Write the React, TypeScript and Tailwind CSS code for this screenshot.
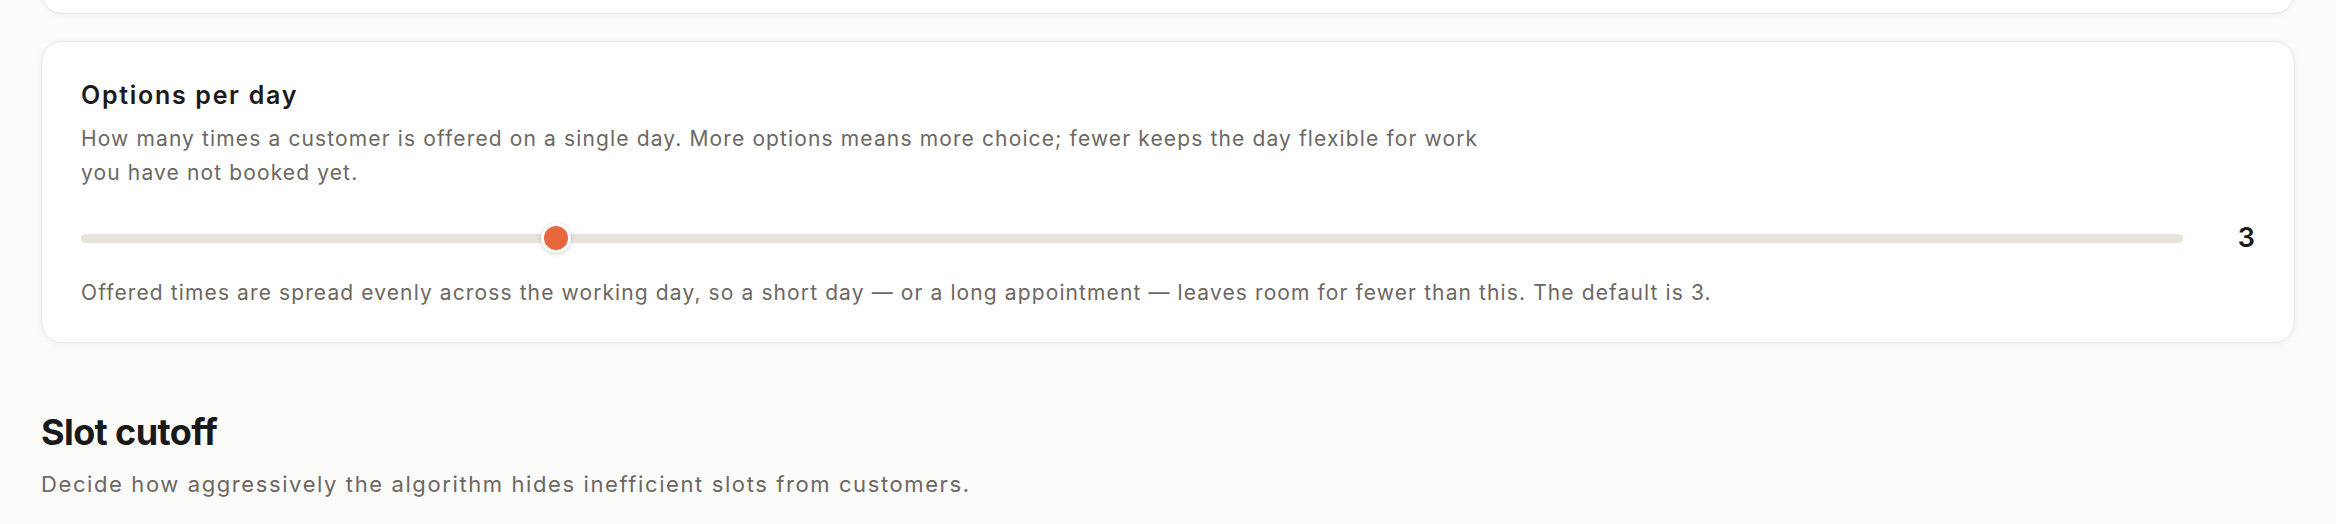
import React from "react";

export default function App() {
  const min = 1;
  const max = 10;
  const value = 3;
  const frac = (value - min) / (max - min);
  return (
    <div
      className="w-full min-h-[524px] bg-[#fbfbfa] px-[41px] overflow-hidden"
      style={{ fontFamily: "Inter, 'Noto Sans', sans-serif" }}
    >
      {/* previous card, only its bottom is visible */}
      <div className="mt-[-86px] h-[100px] rounded-[21px] border-[1.5px] border-[#e9e4dd] bg-white shadow-[0_2px_6px_rgba(0,0,0,0.04)]" />

      <div className="mt-[27px] rounded-[21px] border-[1.5px] border-[#e9e4dd] bg-white shadow-[0_2px_8px_rgba(0,0,0,0.05)] px-[39px] pt-[35px] pb-[32px]">
        <div className="text-[25px] leading-[36px] font-semibold text-[#1c1a19] tracking-[1.7px]">
          Options per day
        </div>
        <p className="mt-[9px] max-w-[1425px] text-[21px] leading-[34px] text-[#6d6762] tracking-[1.13px]">
          How many times a customer is offered on a single day. More options means more choice; fewer keeps the day flexible for work you have not booked yet.
        </p>
        <div className="mt-[33px] flex items-center">
          <div className="relative flex-1 h-[30px] flex items-center">
            <div className="w-full h-[9px] rounded-full bg-[#e9e2db]" />
            <div
              className="absolute top-0 h-[30px] w-[30px] rounded-full bg-[#e8673c] border-[3.5px] border-white shadow-[0_1px_5px_rgba(0,0,0,0.18)]"
              style={{ left: `calc((100% - 30px) * ${frac})` }}
            />
          </div>
          <div className="w-[72px] text-right text-[27px] font-semibold text-[#1c1a19] leading-[30px]">
            {value}
          </div>
        </div>
        <p className="mt-[23px] text-[21px] leading-[34px] text-[#6d6762] tracking-[1.11px]">
          Offered times are spread evenly across the working day, so a short day — or a long appointment — leaves room for fewer than this. The default is 3.
        </p>
      </div>

      <div className="mt-[67px] text-[36px] leading-[44px] font-bold text-[#1a1918] tracking-[-0.6px]">
        Slot cutoff
      </div>
      <p className="mt-[13px] text-[22px] leading-[34px] text-[#6d6762] tracking-[1.6px]">
        Decide how aggressively the algorithm hides inefficient slots from customers.
      </p>
    </div>
  );
}
